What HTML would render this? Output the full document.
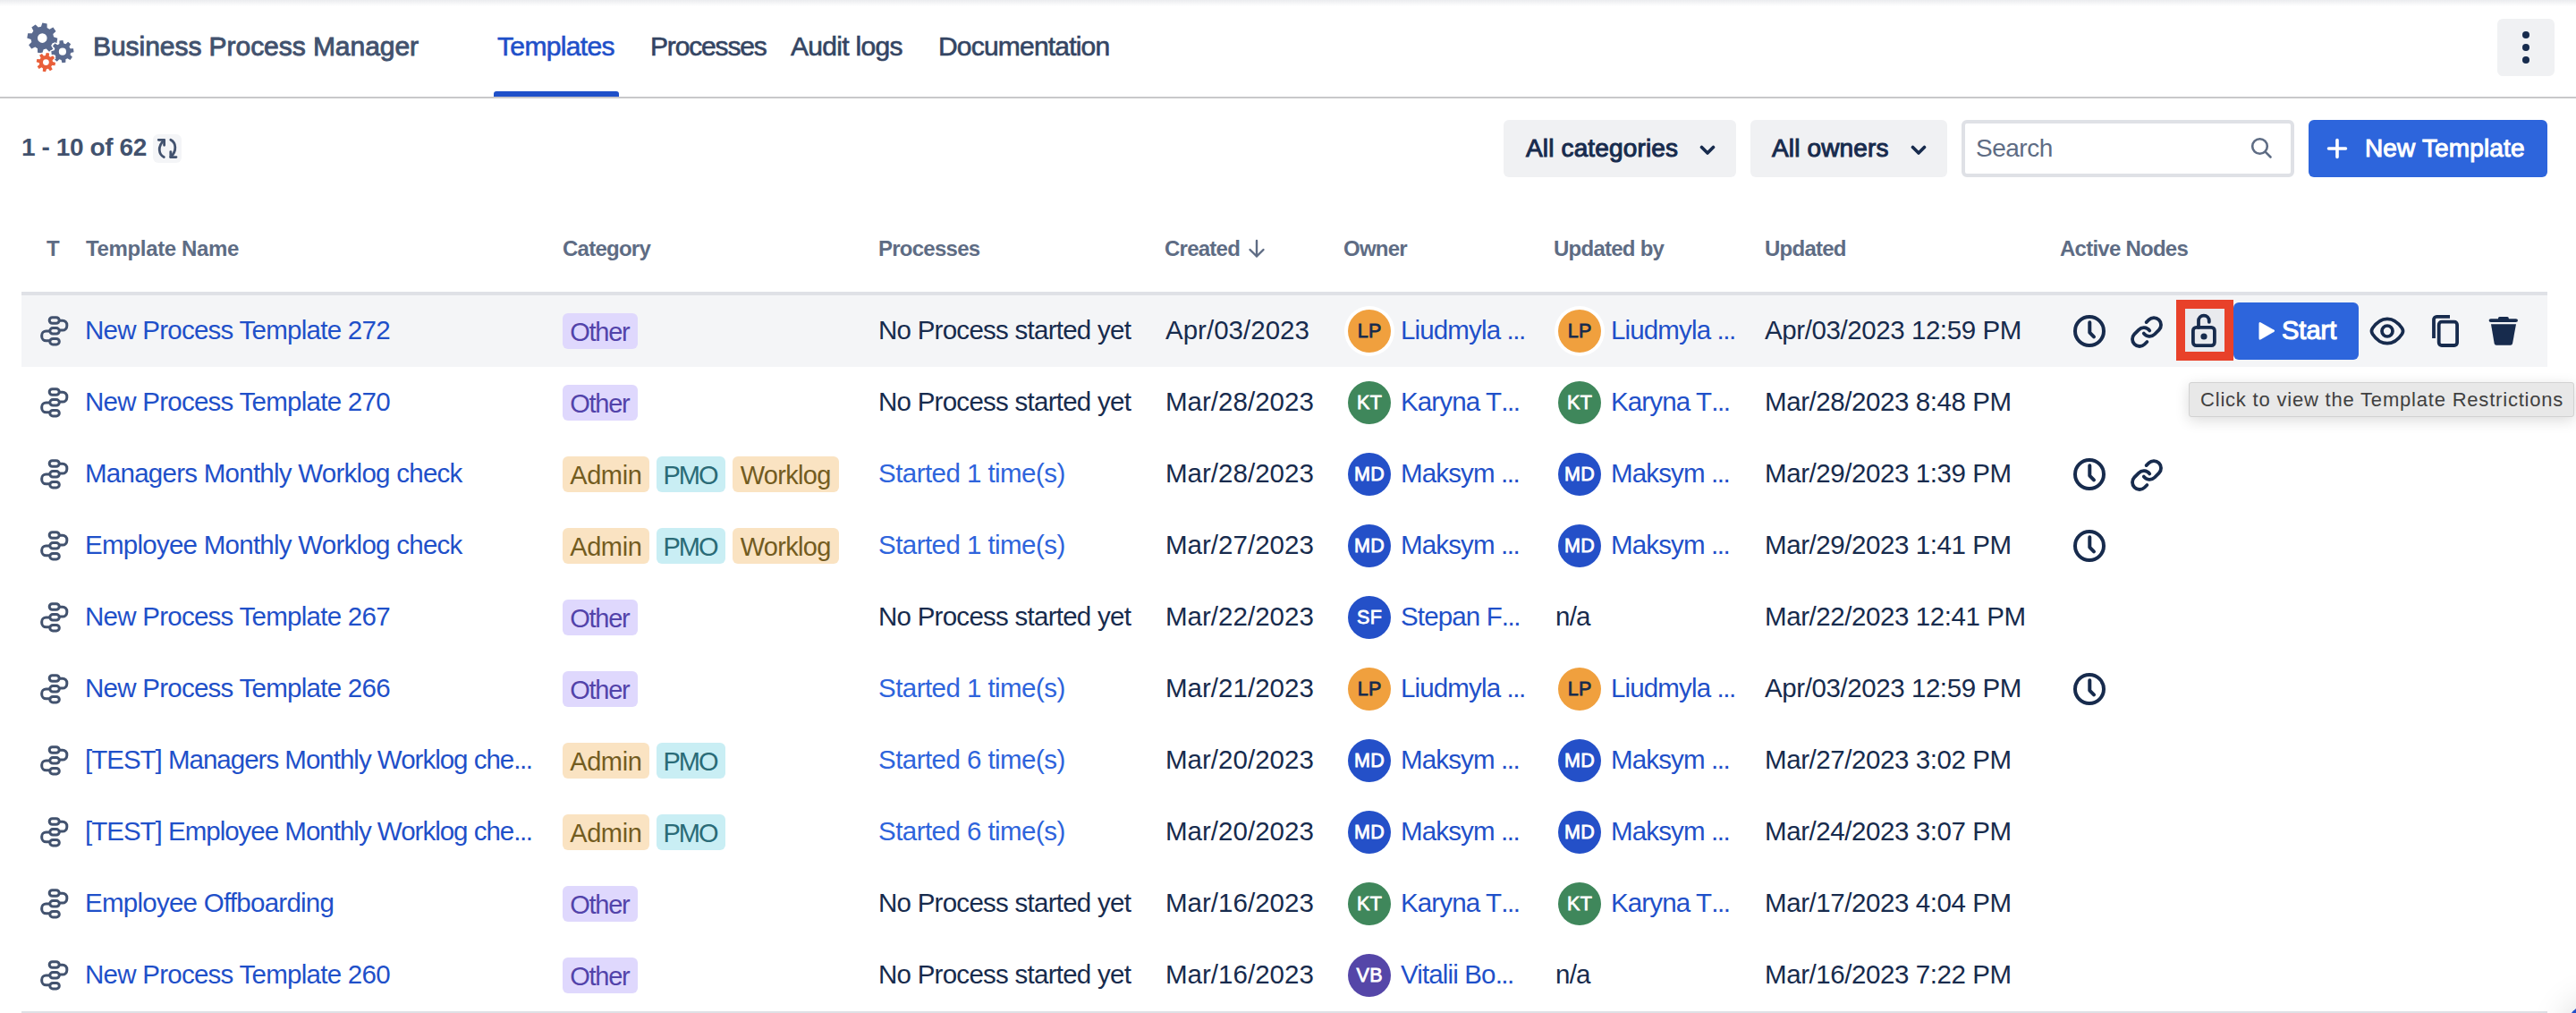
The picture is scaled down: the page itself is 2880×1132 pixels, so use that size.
<!DOCTYPE html>
<html><head><meta charset="utf-8"><title>Business Process Manager</title>
<style>
html,body{margin:0;padding:0;background:#fff;}
#page{position:relative;width:2880px;height:1132px;overflow:hidden;background:#fff;font-family:"Liberation Sans",sans-serif;}
.abs{position:absolute;}
.topshade{position:absolute;left:0;top:0;width:2880px;height:7px;background:linear-gradient(#ebecef,#ffffff);}
.hdrline{position:absolute;left:0;top:108px;width:2880px;height:2px;background:#c8c8ca;}
.title{position:absolute;left:104px;top:32px;height:40px;line-height:40px;font-size:30px;color:#42526e;white-space:nowrap;-webkit-text-stroke:0.9px #42526e;letter-spacing:-0.05px;}
.nav{position:absolute;top:32px;height:40px;line-height:40px;font-size:30px;color:#344563;white-space:nowrap;-webkit-text-stroke:0.6px #344563;letter-spacing:-0.8px;}
.nav.act{color:#1f50c9;-webkit-text-stroke:0.6px #1f50c9;}
.navbar{position:absolute;left:552px;top:102px;width:140px;height:6px;background:#1f50c9;border-radius:3px 3px 0 0;}
.more{position:absolute;left:2792px;top:21px;width:64px;height:64px;border-radius:6px;background:#f0f1f3;}
.more i{position:absolute;left:28px;width:8px;height:8px;border-radius:50%;background:#172b4d;}
.count{position:absolute;left:24px;top:145px;height:40px;line-height:40px;font-size:28px;font-weight:bold;color:#42526e;white-space:nowrap;letter-spacing:-0.4px;}
.refresh{position:absolute;left:171px;top:150px;width:32px;height:32px;border-radius:6px;background:#f4f5f7;}
.btn{position:absolute;top:134px;height:64px;border-radius:6px;background:#f0f1f3;}
.btn .lbl{position:absolute;top:0;height:64px;line-height:64px;font-size:28px;font-weight:normal;-webkit-text-stroke:1px #172b4d;color:#172b4d;white-space:nowrap;letter-spacing:0.15px;}
.search{position:absolute;left:2193px;top:134px;width:364px;height:56px;border:4px solid #dfe1e6;border-radius:6px;background:#fff;}
.search .ph{position:absolute;left:12px;top:0;height:56px;line-height:56px;font-size:28px;color:#5e6c84;letter-spacing:-0.5px;}
.newbtn{position:absolute;left:2581px;top:134px;width:267px;height:64px;border-radius:6px;background:#2d65dc;}
.newbtn .lbl{position:absolute;left:63px;top:0;height:64px;line-height:64px;font-size:28px;font-weight:normal;-webkit-text-stroke:1px #fff;color:#fff;white-space:nowrap;letter-spacing:0.15px;}
.th{position:absolute;top:258px;height:40px;line-height:40px;font-size:24px;font-weight:bold;color:#5e6c84;white-space:nowrap;letter-spacing:-0.75px;}
.tline{position:absolute;left:24px;top:326px;width:2824px;height:4px;background:#dfe1e6;}
.bline{position:absolute;left:24px;top:1130px;width:2824px;height:4px;background:#dfe1e6;}
.hl{position:absolute;left:24px;width:2824px;height:80px;background:#f4f5f7;}
.t{position:absolute;height:80px;line-height:80px;margin-top:-1px;font-size:29.5px;white-space:nowrap;letter-spacing:-0.74px;}
.link{color:#1f50c9;}
.plink{color:#2e64dc;}
.dark{color:#172b4d;}
.date{letter-spacing:0.02px;}
.upd{letter-spacing:-0.42px;}
.pname{letter-spacing:-0.86px;}
.plink{letter-spacing:-0.55px;}
.cell{position:absolute;}
.cell svg{display:block;}
.tag{position:absolute;height:40px;line-height:42px;border-radius:6px;font-size:29px;text-align:center;white-space:nowrap;}
.av{position:absolute;width:48px;height:48px;border-radius:50%;font-size:21.5px;font-weight:normal;-webkit-text-stroke-width:0.8px;line-height:49px;text-align:center;letter-spacing:0.4px;text-indent:0.4px;}
.av.ring{box-shadow:0 0 0 4px #fff;}
.ic{position:absolute;}
.lockbox{position:absolute;left:2433px;top:335px;width:44px;height:48px;border:10px solid #e8412a;background:#e9eaee;}
.start{position:absolute;left:2497px;top:338px;width:140px;height:64px;border-radius:6px;background:#2d65dc;}
.start .lbl{position:absolute;left:54px;top:-1px;height:64px;line-height:64px;font-size:29px;font-weight:normal;-webkit-text-stroke:1.1px #fff;color:#fff;letter-spacing:0px;}
.tip{position:absolute;left:2447px;top:427px;width:429px;height:37px;background:#e8e8e8;border:1px solid #d2d2d2;border-radius:3px;box-shadow:0 4px 16px rgba(0,0,0,0.14);}
.tip span{position:absolute;left:12px;top:0;height:38px;line-height:38px;font-size:22px;color:#404040;white-space:nowrap;letter-spacing:0.8px;}
.fab{position:absolute;left:2868px;top:1120px;width:64px;height:64px;border-radius:50%;background:#2450c8;box-shadow:0 0 40px rgba(0,0,0,0.16);}

.el{letter-spacing:-1.5px;}
.tname{letter-spacing:-1.0px;}

</style></head><body>
<div id="page">
<div class="topshade"></div>
<svg style="position:absolute;left:0;top:0" width="100" height="100" viewBox="0 0 100 100"><path fill="#5a6a8f" fill-rule="evenodd" d="M45.94,29.87 L47.36,25.60 L52.61,26.45 L52.61,30.95 L55.34,32.64 L59.37,30.62 L62.48,34.94 L59.29,38.12 L60.03,41.24 L64.30,42.66 L63.45,47.91 L58.95,47.91 L57.26,50.64 L59.28,54.67 L54.96,57.78 L51.78,54.59 L48.66,55.33 L47.24,59.60 L41.99,58.75 L41.99,54.25 L39.26,52.56 L35.23,54.58 L32.12,50.26 L35.31,47.08 L34.57,43.96 L30.30,42.54 L31.15,37.29 L35.65,37.29 L37.34,34.56 L35.32,30.53 L39.64,27.42 L42.82,30.61Z M52.60,42.60 a5.3,5.3 0 1 0 -10.60,0 a5.3,5.3 0 1 0 10.60,0Z"/><path fill="#5a6a8f" fill-rule="evenodd" stroke="#fff" stroke-width="2.2" paint-order="stroke" d="M66.40,49.09 L66.46,45.58 L70.38,45.11 L71.27,48.50 L73.51,49.13 L76.04,46.70 L79.14,49.13 L77.37,52.16 L78.51,54.20 L82.02,54.26 L82.49,58.18 L79.10,59.07 L78.47,61.31 L80.90,63.84 L78.47,66.94 L75.44,65.17 L73.40,66.31 L73.34,69.82 L69.42,70.29 L68.53,66.90 L66.29,66.27 L63.76,68.70 L60.66,66.27 L62.43,63.24 L61.29,61.20 L57.78,61.14 L57.31,57.22 L60.70,56.33 L61.33,54.09 L58.90,51.56 L61.33,48.46 L64.36,50.23Z M74.00,57.70 a4.1,4.1 0 1 0 -8.20,0 a4.1,4.1 0 1 0 8.20,0Z"/><path fill="#e95f3a" fill-rule="evenodd" stroke="#fff" stroke-width="2.2" paint-order="stroke" d="M50.82,62.02 L51.76,58.91 L55.05,59.54 L54.76,62.78 L56.35,63.83 L59.22,62.29 L61.09,65.07 L58.60,67.15 L58.98,69.02 L62.09,69.96 L61.46,73.25 L58.22,72.96 L57.17,74.55 L58.71,77.42 L55.93,79.29 L53.85,76.80 L51.98,77.18 L51.04,80.29 L47.75,79.66 L48.04,76.42 L46.45,75.37 L43.58,76.91 L41.71,74.13 L44.20,72.05 L43.82,70.18 L40.71,69.24 L41.34,65.95 L44.58,66.24 L45.63,64.65 L44.09,61.78 L46.87,59.91 L48.95,62.40Z M54.80,69.60 a3.4,3.4 0 1 0 -6.80,0 a3.4,3.4 0 1 0 6.80,0Z"/></svg>
<div class="title">Business Process Manager</div>
<div class="nav act" style="left:556px;letter-spacing:-0.65px">Templates</div>
<div class="nav" style="left:727px;letter-spacing:-1.15px">Processes</div>
<div class="nav" style="left:884px;letter-spacing:-0.7px">Audit logs</div>
<div class="nav" style="left:1049px">Documentation</div>
<div class="navbar"></div>
<div class="hdrline"></div>
<div class="more"><i style="top:14px"></i><i style="top:28px"></i><i style="top:42px"></i></div>

<div class="count">1 - 10 of 62</div>
<div class="refresh"><svg width="32" height="32" viewBox="0 0 32 32" style="position:absolute;left:0;top:0"><g fill="none" stroke="#42526e" stroke-width="2.8" stroke-linecap="round" stroke-linejoin="round"><path d="M12.3 25.6C6.6 22.6 4.6 14 12.4 6.5"/><path d="M6.2 6.3H12.6V12.3"/><path d="M19.8 6.3C25.5 9.3 27.5 18 19.7 25.6"/><path d="M19.8 19.6V25.6H26"/></g></svg></div>

<div class="btn" style="left:1681px;width:260px"><div class="lbl" style="left:25px">All categories</div><svg style="position:absolute;left:219px;top:28px" width="18" height="12" viewBox="0 0 18 12"><path d="M2.5 2.5L9 9L15.5 2.5" fill="none" stroke="#172b4d" stroke-width="3.6" stroke-linecap="round" stroke-linejoin="round"/></svg></div>
<div class="btn" style="left:1957px;width:220px"><div class="lbl" style="left:24px">All owners</div><svg style="position:absolute;left:179px;top:28px" width="18" height="12" viewBox="0 0 18 12"><path d="M2.5 2.5L9 9L15.5 2.5" fill="none" stroke="#172b4d" stroke-width="3.6" stroke-linecap="round" stroke-linejoin="round"/></svg></div>
<div class="search"><div class="ph">Search</div><svg style="position:absolute;left:318px;top:14px" width="28" height="28" viewBox="0 0 28 28"><g fill="none" stroke="#5e6c84" stroke-width="2.6" stroke-linecap="round"><circle cx="11.5" cy="11.5" r="8.3"/><path d="M17.6 17.6L23.5 23.5"/></g></svg></div>
<div class="newbtn"><svg style="position:absolute;left:18px;top:18px" width="28" height="28" viewBox="0 0 28 28"><g stroke="#fff" stroke-width="3.6" stroke-linecap="round"><path d="M14 4.5V23.5M4.5 14H23.5"/></g></svg><div class="lbl">New Template</div></div>

<div class="th" style="left:52px">T</div>
<div class="th" style="left:96px;letter-spacing:-0.35px">Template Name</div>
<div class="th" style="left:629px">Category</div>
<div class="th" style="left:982px">Processes</div>
<div class="th" style="left:1302px">Created</div>
<svg style="position:absolute;left:1392px;top:266px" width="26" height="24" viewBox="0 0 26 24"><g fill="none" stroke="#5e6c84" stroke-width="2.4" stroke-linecap="round" stroke-linejoin="round"><path d="M13 3V20.5M5.5 13L13 20.5L20.5 13"/></g></svg>
<div class="th" style="left:1502px">Owner</div>
<div class="th" style="left:1737px">Updated by</div>
<div class="th" style="left:1973px">Updated</div>
<div class="th" style="left:2303px">Active Nodes</div>
<div class="tline"></div>
<div class="bline"></div>

<div class="hl" style="top:330px"></div>
<div class="cell" style="left:40px;top:348px"><svg class="ti" width="42" height="44" viewBox="0 0 42 44"><g fill="none" stroke="#42526e" stroke-width="3"><rect x="15.2" y="6.7" width="11" height="6.6" rx="3.3"/><rect x="15.8" y="18.5" width="10.5" height="6.6" rx="3.3"/><rect x="15.8" y="30.4" width="10.5" height="6.6" rx="3.3"/><path d="M26.3 10.2H30a4.8 4.8 0 0 1 4.8 4.8v1.3a4.8 4.8 0 0 1 -4.8 4.8H26.3"/><path d="M15.8 21.9H11.5a4.8 4.8 0 0 0 -4.8 4.8v1.3a4.8 4.8 0 0 0 4.8 4.8H15.8"/></g></svg></div>
<div class="t link" style="left:95px;top:330px">New Process Template 272</div>
<div class="tag" style="left:629px;top:350px;width:84px;background:#dfd8fd;color:#5243aa;letter-spacing:-1.3px;text-indent:-1.3px">Other</div>
<div class="t dark" style="left:982px;top:330px">No Process started yet</div>
<div class="t dark date" style="left:1303px;top:330px">Apr/03/2023</div>
<div class="av ring" style="left:1507px;top:346px;background:#f0a03e;color:#172b4d">LP</div><div class="t link pname" style="left:1566px;top:330px">Liudmyla <span class="el">...</span></div>
<div class="av ring" style="left:1742px;top:346px;background:#f0a03e;color:#172b4d">LP</div><div class="t link pname" style="left:1801px;top:330px">Liudmyla <span class="el">...</span></div>
<div class="t dark upd" style="left:1973px;top:330px">Apr/03/2023 12:59 PM</div>
<svg class="ic" style="left:2316px;top:350px" width="40" height="40" viewBox="0 0 40 40"><g fill="none" stroke="#172b4d" stroke-width="4" stroke-linecap="round" stroke-linejoin="round"><circle cx="20" cy="20" r="16"/><path d="M20.3 10.3V21.6L25 26.3"/></g></svg>
<svg class="ic" style="left:2378px;top:349px;overflow:visible" width="44" height="44" viewBox="0 0 44 44"><g transform="translate(2.7,2.7) scale(1.61)" fill="none" stroke="#172b4d" stroke-width="2.36" stroke-linecap="round" stroke-linejoin="round"><path d="M10 13a5 5 0 0 0 7.54.54l3-3a5 5 0 0 0-7.07-7.07l-1.72 1.71"/><path d="M14 11a5 5 0 0 0-7.54-.54l-3 3a5 5 0 0 0 7.07 7.07l1.71-1.71"/></g></svg>
<div class="cell" style="left:40px;top:428px"><svg class="ti" width="42" height="44" viewBox="0 0 42 44"><g fill="none" stroke="#42526e" stroke-width="3"><rect x="15.2" y="6.7" width="11" height="6.6" rx="3.3"/><rect x="15.8" y="18.5" width="10.5" height="6.6" rx="3.3"/><rect x="15.8" y="30.4" width="10.5" height="6.6" rx="3.3"/><path d="M26.3 10.2H30a4.8 4.8 0 0 1 4.8 4.8v1.3a4.8 4.8 0 0 1 -4.8 4.8H26.3"/><path d="M15.8 21.9H11.5a4.8 4.8 0 0 0 -4.8 4.8v1.3a4.8 4.8 0 0 0 4.8 4.8H15.8"/></g></svg></div>
<div class="t link" style="left:95px;top:410px">New Process Template 270</div>
<div class="tag" style="left:629px;top:430px;width:84px;background:#dfd8fd;color:#5243aa;letter-spacing:-1.3px;text-indent:-1.3px">Other</div>
<div class="t dark" style="left:982px;top:410px">No Process started yet</div>
<div class="t dark date" style="left:1303px;top:410px">Mar/28/2023</div>
<div class="av" style="left:1507px;top:426px;background:#3f875b;color:#ffffff">KT</div><div class="t link pname" style="left:1566px;top:410px">Karyna T<span class="el">...</span></div>
<div class="av" style="left:1742px;top:426px;background:#3f875b;color:#ffffff">KT</div><div class="t link pname" style="left:1801px;top:410px">Karyna T<span class="el">...</span></div>
<div class="t dark upd" style="left:1973px;top:410px">Mar/28/2023 8:48 PM</div>
<div class="cell" style="left:40px;top:508px"><svg class="ti" width="42" height="44" viewBox="0 0 42 44"><g fill="none" stroke="#42526e" stroke-width="3"><rect x="15.2" y="6.7" width="11" height="6.6" rx="3.3"/><rect x="15.8" y="18.5" width="10.5" height="6.6" rx="3.3"/><rect x="15.8" y="30.4" width="10.5" height="6.6" rx="3.3"/><path d="M26.3 10.2H30a4.8 4.8 0 0 1 4.8 4.8v1.3a4.8 4.8 0 0 1 -4.8 4.8H26.3"/><path d="M15.8 21.9H11.5a4.8 4.8 0 0 0 -4.8 4.8v1.3a4.8 4.8 0 0 0 4.8 4.8H15.8"/></g></svg></div>
<div class="t link" style="left:95px;top:490px">Managers Monthly Worklog check</div>
<div class="tag" style="left:629px;top:510px;width:97px;background:#fae3c2;color:#735c1f;letter-spacing:-0.4px;text-indent:-0.4px">Admin</div>
<div class="tag" style="left:734px;top:510px;width:77px;background:#c9eef4;color:#2a6b77;letter-spacing:-2.0px;text-indent:-2.0px">PMO</div>
<div class="tag" style="left:819px;top:510px;width:119px;background:#fae3c2;color:#735c1f;letter-spacing:-0.7px;text-indent:-0.7px">Worklog</div>
<div class="t plink" style="left:982px;top:490px">Started 1 time(s)</div>
<div class="t dark date" style="left:1303px;top:490px">Mar/28/2023</div>
<div class="av" style="left:1507px;top:506px;background:#2450c8;color:#ffffff">MD</div><div class="t link pname" style="left:1566px;top:490px">Maksym <span class="el">...</span></div>
<div class="av" style="left:1742px;top:506px;background:#2450c8;color:#ffffff">MD</div><div class="t link pname" style="left:1801px;top:490px">Maksym <span class="el">...</span></div>
<div class="t dark upd" style="left:1973px;top:490px">Mar/29/2023 1:39 PM</div>
<svg class="ic" style="left:2316px;top:510px" width="40" height="40" viewBox="0 0 40 40"><g fill="none" stroke="#172b4d" stroke-width="4" stroke-linecap="round" stroke-linejoin="round"><circle cx="20" cy="20" r="16"/><path d="M20.3 10.3V21.6L25 26.3"/></g></svg>
<svg class="ic" style="left:2378px;top:509px;overflow:visible" width="44" height="44" viewBox="0 0 44 44"><g transform="translate(2.7,2.7) scale(1.61)" fill="none" stroke="#172b4d" stroke-width="2.36" stroke-linecap="round" stroke-linejoin="round"><path d="M10 13a5 5 0 0 0 7.54.54l3-3a5 5 0 0 0-7.07-7.07l-1.72 1.71"/><path d="M14 11a5 5 0 0 0-7.54-.54l-3 3a5 5 0 0 0 7.07 7.07l1.71-1.71"/></g></svg>
<div class="cell" style="left:40px;top:588px"><svg class="ti" width="42" height="44" viewBox="0 0 42 44"><g fill="none" stroke="#42526e" stroke-width="3"><rect x="15.2" y="6.7" width="11" height="6.6" rx="3.3"/><rect x="15.8" y="18.5" width="10.5" height="6.6" rx="3.3"/><rect x="15.8" y="30.4" width="10.5" height="6.6" rx="3.3"/><path d="M26.3 10.2H30a4.8 4.8 0 0 1 4.8 4.8v1.3a4.8 4.8 0 0 1 -4.8 4.8H26.3"/><path d="M15.8 21.9H11.5a4.8 4.8 0 0 0 -4.8 4.8v1.3a4.8 4.8 0 0 0 4.8 4.8H15.8"/></g></svg></div>
<div class="t link" style="left:95px;top:570px">Employee Monthly Worklog check</div>
<div class="tag" style="left:629px;top:590px;width:97px;background:#fae3c2;color:#735c1f;letter-spacing:-0.4px;text-indent:-0.4px">Admin</div>
<div class="tag" style="left:734px;top:590px;width:77px;background:#c9eef4;color:#2a6b77;letter-spacing:-2.0px;text-indent:-2.0px">PMO</div>
<div class="tag" style="left:819px;top:590px;width:119px;background:#fae3c2;color:#735c1f;letter-spacing:-0.7px;text-indent:-0.7px">Worklog</div>
<div class="t plink" style="left:982px;top:570px">Started 1 time(s)</div>
<div class="t dark date" style="left:1303px;top:570px">Mar/27/2023</div>
<div class="av" style="left:1507px;top:586px;background:#2450c8;color:#ffffff">MD</div><div class="t link pname" style="left:1566px;top:570px">Maksym <span class="el">...</span></div>
<div class="av" style="left:1742px;top:586px;background:#2450c8;color:#ffffff">MD</div><div class="t link pname" style="left:1801px;top:570px">Maksym <span class="el">...</span></div>
<div class="t dark upd" style="left:1973px;top:570px">Mar/29/2023 1:41 PM</div>
<svg class="ic" style="left:2316px;top:590px" width="40" height="40" viewBox="0 0 40 40"><g fill="none" stroke="#172b4d" stroke-width="4" stroke-linecap="round" stroke-linejoin="round"><circle cx="20" cy="20" r="16"/><path d="M20.3 10.3V21.6L25 26.3"/></g></svg>
<div class="cell" style="left:40px;top:668px"><svg class="ti" width="42" height="44" viewBox="0 0 42 44"><g fill="none" stroke="#42526e" stroke-width="3"><rect x="15.2" y="6.7" width="11" height="6.6" rx="3.3"/><rect x="15.8" y="18.5" width="10.5" height="6.6" rx="3.3"/><rect x="15.8" y="30.4" width="10.5" height="6.6" rx="3.3"/><path d="M26.3 10.2H30a4.8 4.8 0 0 1 4.8 4.8v1.3a4.8 4.8 0 0 1 -4.8 4.8H26.3"/><path d="M15.8 21.9H11.5a4.8 4.8 0 0 0 -4.8 4.8v1.3a4.8 4.8 0 0 0 4.8 4.8H15.8"/></g></svg></div>
<div class="t link" style="left:95px;top:650px">New Process Template 267</div>
<div class="tag" style="left:629px;top:670px;width:84px;background:#dfd8fd;color:#5243aa;letter-spacing:-1.3px;text-indent:-1.3px">Other</div>
<div class="t dark" style="left:982px;top:650px">No Process started yet</div>
<div class="t dark date" style="left:1303px;top:650px">Mar/22/2023</div>
<div class="av" style="left:1507px;top:666px;background:#2450c8;color:#ffffff">SF</div><div class="t link pname" style="left:1566px;top:650px">Stepan F<span class="el">...</span></div>
<div class="t dark" style="left:1739px;top:650px">n/a</div>
<div class="t dark upd" style="left:1973px;top:650px">Mar/22/2023 12:41 PM</div>
<div class="cell" style="left:40px;top:748px"><svg class="ti" width="42" height="44" viewBox="0 0 42 44"><g fill="none" stroke="#42526e" stroke-width="3"><rect x="15.2" y="6.7" width="11" height="6.6" rx="3.3"/><rect x="15.8" y="18.5" width="10.5" height="6.6" rx="3.3"/><rect x="15.8" y="30.4" width="10.5" height="6.6" rx="3.3"/><path d="M26.3 10.2H30a4.8 4.8 0 0 1 4.8 4.8v1.3a4.8 4.8 0 0 1 -4.8 4.8H26.3"/><path d="M15.8 21.9H11.5a4.8 4.8 0 0 0 -4.8 4.8v1.3a4.8 4.8 0 0 0 4.8 4.8H15.8"/></g></svg></div>
<div class="t link" style="left:95px;top:730px">New Process Template 266</div>
<div class="tag" style="left:629px;top:750px;width:84px;background:#dfd8fd;color:#5243aa;letter-spacing:-1.3px;text-indent:-1.3px">Other</div>
<div class="t plink" style="left:982px;top:730px">Started 1 time(s)</div>
<div class="t dark date" style="left:1303px;top:730px">Mar/21/2023</div>
<div class="av" style="left:1507px;top:746px;background:#f0a03e;color:#172b4d">LP</div><div class="t link pname" style="left:1566px;top:730px">Liudmyla <span class="el">...</span></div>
<div class="av" style="left:1742px;top:746px;background:#f0a03e;color:#172b4d">LP</div><div class="t link pname" style="left:1801px;top:730px">Liudmyla <span class="el">...</span></div>
<div class="t dark upd" style="left:1973px;top:730px">Apr/03/2023 12:59 PM</div>
<svg class="ic" style="left:2316px;top:750px" width="40" height="40" viewBox="0 0 40 40"><g fill="none" stroke="#172b4d" stroke-width="4" stroke-linecap="round" stroke-linejoin="round"><circle cx="20" cy="20" r="16"/><path d="M20.3 10.3V21.6L25 26.3"/></g></svg>
<div class="cell" style="left:40px;top:828px"><svg class="ti" width="42" height="44" viewBox="0 0 42 44"><g fill="none" stroke="#42526e" stroke-width="3"><rect x="15.2" y="6.7" width="11" height="6.6" rx="3.3"/><rect x="15.8" y="18.5" width="10.5" height="6.6" rx="3.3"/><rect x="15.8" y="30.4" width="10.5" height="6.6" rx="3.3"/><path d="M26.3 10.2H30a4.8 4.8 0 0 1 4.8 4.8v1.3a4.8 4.8 0 0 1 -4.8 4.8H26.3"/><path d="M15.8 21.9H11.5a4.8 4.8 0 0 0 -4.8 4.8v1.3a4.8 4.8 0 0 0 4.8 4.8H15.8"/></g></svg></div>
<div class="t link tname" style="left:95px;top:810px">[TEST] Managers Monthly Worklog che<span class="el">...</span></div>
<div class="tag" style="left:629px;top:830px;width:97px;background:#fae3c2;color:#735c1f;letter-spacing:-0.4px;text-indent:-0.4px">Admin</div>
<div class="tag" style="left:734px;top:830px;width:77px;background:#c9eef4;color:#2a6b77;letter-spacing:-2.0px;text-indent:-2.0px">PMO</div>
<div class="t plink" style="left:982px;top:810px">Started 6 time(s)</div>
<div class="t dark date" style="left:1303px;top:810px">Mar/20/2023</div>
<div class="av" style="left:1507px;top:826px;background:#2450c8;color:#ffffff">MD</div><div class="t link pname" style="left:1566px;top:810px">Maksym <span class="el">...</span></div>
<div class="av" style="left:1742px;top:826px;background:#2450c8;color:#ffffff">MD</div><div class="t link pname" style="left:1801px;top:810px">Maksym <span class="el">...</span></div>
<div class="t dark upd" style="left:1973px;top:810px">Mar/27/2023 3:02 PM</div>
<div class="cell" style="left:40px;top:908px"><svg class="ti" width="42" height="44" viewBox="0 0 42 44"><g fill="none" stroke="#42526e" stroke-width="3"><rect x="15.2" y="6.7" width="11" height="6.6" rx="3.3"/><rect x="15.8" y="18.5" width="10.5" height="6.6" rx="3.3"/><rect x="15.8" y="30.4" width="10.5" height="6.6" rx="3.3"/><path d="M26.3 10.2H30a4.8 4.8 0 0 1 4.8 4.8v1.3a4.8 4.8 0 0 1 -4.8 4.8H26.3"/><path d="M15.8 21.9H11.5a4.8 4.8 0 0 0 -4.8 4.8v1.3a4.8 4.8 0 0 0 4.8 4.8H15.8"/></g></svg></div>
<div class="t link tname" style="left:95px;top:890px">[TEST] Employee Monthly Worklog che<span class="el">...</span></div>
<div class="tag" style="left:629px;top:910px;width:97px;background:#fae3c2;color:#735c1f;letter-spacing:-0.4px;text-indent:-0.4px">Admin</div>
<div class="tag" style="left:734px;top:910px;width:77px;background:#c9eef4;color:#2a6b77;letter-spacing:-2.0px;text-indent:-2.0px">PMO</div>
<div class="t plink" style="left:982px;top:890px">Started 6 time(s)</div>
<div class="t dark date" style="left:1303px;top:890px">Mar/20/2023</div>
<div class="av" style="left:1507px;top:906px;background:#2450c8;color:#ffffff">MD</div><div class="t link pname" style="left:1566px;top:890px">Maksym <span class="el">...</span></div>
<div class="av" style="left:1742px;top:906px;background:#2450c8;color:#ffffff">MD</div><div class="t link pname" style="left:1801px;top:890px">Maksym <span class="el">...</span></div>
<div class="t dark upd" style="left:1973px;top:890px">Mar/24/2023 3:07 PM</div>
<div class="cell" style="left:40px;top:988px"><svg class="ti" width="42" height="44" viewBox="0 0 42 44"><g fill="none" stroke="#42526e" stroke-width="3"><rect x="15.2" y="6.7" width="11" height="6.6" rx="3.3"/><rect x="15.8" y="18.5" width="10.5" height="6.6" rx="3.3"/><rect x="15.8" y="30.4" width="10.5" height="6.6" rx="3.3"/><path d="M26.3 10.2H30a4.8 4.8 0 0 1 4.8 4.8v1.3a4.8 4.8 0 0 1 -4.8 4.8H26.3"/><path d="M15.8 21.9H11.5a4.8 4.8 0 0 0 -4.8 4.8v1.3a4.8 4.8 0 0 0 4.8 4.8H15.8"/></g></svg></div>
<div class="t link" style="left:95px;top:970px">Employee Offboarding</div>
<div class="tag" style="left:629px;top:990px;width:84px;background:#dfd8fd;color:#5243aa;letter-spacing:-1.3px;text-indent:-1.3px">Other</div>
<div class="t dark" style="left:982px;top:970px">No Process started yet</div>
<div class="t dark date" style="left:1303px;top:970px">Mar/16/2023</div>
<div class="av" style="left:1507px;top:986px;background:#3f875b;color:#ffffff">KT</div><div class="t link pname" style="left:1566px;top:970px">Karyna T<span class="el">...</span></div>
<div class="av" style="left:1742px;top:986px;background:#3f875b;color:#ffffff">KT</div><div class="t link pname" style="left:1801px;top:970px">Karyna T<span class="el">...</span></div>
<div class="t dark upd" style="left:1973px;top:970px">Mar/17/2023 4:04 PM</div>
<div class="cell" style="left:40px;top:1068px"><svg class="ti" width="42" height="44" viewBox="0 0 42 44"><g fill="none" stroke="#42526e" stroke-width="3"><rect x="15.2" y="6.7" width="11" height="6.6" rx="3.3"/><rect x="15.8" y="18.5" width="10.5" height="6.6" rx="3.3"/><rect x="15.8" y="30.4" width="10.5" height="6.6" rx="3.3"/><path d="M26.3 10.2H30a4.8 4.8 0 0 1 4.8 4.8v1.3a4.8 4.8 0 0 1 -4.8 4.8H26.3"/><path d="M15.8 21.9H11.5a4.8 4.8 0 0 0 -4.8 4.8v1.3a4.8 4.8 0 0 0 4.8 4.8H15.8"/></g></svg></div>
<div class="t link" style="left:95px;top:1050px">New Process Template 260</div>
<div class="tag" style="left:629px;top:1070px;width:84px;background:#dfd8fd;color:#5243aa;letter-spacing:-1.3px;text-indent:-1.3px">Other</div>
<div class="t dark" style="left:982px;top:1050px">No Process started yet</div>
<div class="t dark date" style="left:1303px;top:1050px">Mar/16/2023</div>
<div class="av" style="left:1507px;top:1066px;background:#5546a8;color:#ffffff">VB</div><div class="t link pname" style="left:1566px;top:1050px">Vitalii Bo<span class="el">...</span></div>
<div class="t dark" style="left:1739px;top:1050px">n/a</div>
<div class="t dark upd" style="left:1973px;top:1050px">Mar/16/2023 7:22 PM</div>
<div class="lockbox"><svg style="position:absolute;left:0;top:0" width="44" height="48" viewBox="0 0 44 48"><g fill="none" stroke="#172b4d" stroke-width="3.8" stroke-linecap="round" stroke-linejoin="round"><rect x="8.9" y="20.9" width="24" height="20.2" rx="3.5"/><path d="M15 20.9V13.5a5.9 5.9 0 0 1 11.8 0V14.8"/></g><circle cx="21" cy="31" r="3.6" fill="#172b4d"/></svg></div>
<div class="start"><svg style="position:absolute;left:26px;top:20px" width="22" height="24" viewBox="0 0 22 24"><path d="M2.5 3.8Q2.5 1.3 4.8 2.5L19.2 10.6Q21 11.8 19.2 13L4.8 21.3Q2.5 22.5 2.5 20Z" fill="#fff"/></svg><div class="lbl">Start</div></div>
<svg class="ic" style="left:2645px;top:350px" width="48" height="40" viewBox="0 0 48 40"><g fill="none" stroke="#172b4d" stroke-width="3.7"><path d="M7.5 16.8Q14.5 6.3 24 6.3Q33.5 6.3 40.5 16.8Q42.6 20 40.5 23.2Q33.5 33.7 24 33.7Q14.5 33.7 7.5 23.2Q5.4 20 7.5 16.8Z" stroke-linejoin="round"/><circle cx="24" cy="20" r="6"/></g></svg>
<svg class="ic" style="left:2712px;top:346px" width="44" height="48" viewBox="0 0 44 48"><g fill="none" stroke="#172b4d" stroke-width="3.8"><path d="M27 7.8H12.3a3.3 3.3 0 0 0 -3.3 3.3V32"/><rect x="14.7" y="13.7" width="20.4" height="26.3" rx="3.2"/></g></svg>
<svg class="ic" style="left:2776px;top:348px" width="46" height="44" viewBox="0 0 46 44"><g fill="#172b4d"><path d="M17 7.5Q17 5.9 18.6 5.9H27.2Q28.8 5.9 28.8 7.5V8.2H36.8Q39 8.2 39 10Q39 11.9 36.8 11.9H8.8Q6.6 11.9 6.6 10Q6.6 8.2 8.8 8.2H17Z"/><path d="M9 14.3H37L33 36Q32.6 37.7 30.8 37.7H14.9Q13.1 37.7 12.7 36Z"/></g></svg>
<div class="tip"><span>Click to view the Template Restrictions</span></div>
<div class="fab"></div>

</div>
</body></html>
